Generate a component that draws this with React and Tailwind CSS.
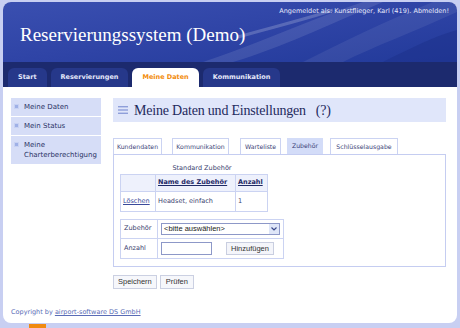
import { useState } from "react";

const sans = { fontFamily: '"DejaVu Sans", Verdana, sans-serif' };
const serif = { fontFamily: '"Liberation Serif", Georgia, serif' };
const arial = { fontFamily: '"Liberation Sans", Arial, sans-serif' };

function NavTab({ label, active }) {
    return (
        <div
            className={`h-[19px] px-[10px] rounded-t-[6px] flex items-center text-[6.5px] font-bold ${
                active ? "bg-white text-[#f28c0c]" : "bg-[#26388a] text-[#e4e8fb]"
            }`}
        >
            {label}
        </div>
    );
}

function SideItem({ children, last }) {
    return (
        <div className={`flex items-start gap-[5px] px-[3px] py-[4px] ${last ? "" : "border-b border-white"}`}>
            <span className="mt-[2px] w-[5px] h-[5px] shrink-0 bg-[#9fb0e6] border border-[#c7d1f3]" />
            <span className="text-[7px] leading-[10px] text-[#2b3466]">{children}</span>
        </div>
    );
}

function SubTab({ label, active, className }) {
    return (
        <div
            className={`h-[16px] flex items-center justify-center text-[6.2px] text-[#3c4478] ${className} ${
                active ? "bg-[#d3dcf8] border border-[#d3dcf8]" : "bg-white border border-[#cbd3f2] border-b-0"
            }`}
        >
            {label}
        </div>
    );
}

export default function App() {
    const [anzahl, setAnzahl] = useState("");

    return (
        <div className="w-[460px] h-[328px] bg-[#c8cff2] pt-[2px] px-[3px] overflow-hidden relative" style={sans}>
            <div className="h-[321px] rounded-[8px] overflow-hidden bg-white flex flex-col">
                {/* header */}
                <div className="h-[60px] relative bg-gradient-to-br from-[#3a4fb0] via-[#2f44a6] to-[#223a9a] overflow-hidden">
                    <svg className="absolute inset-0" width="454" height="60" viewBox="0 0 454 60">
                        <path d="M200 60 C 260 40, 300 20, 360 0 L 380 0 C 320 25, 280 45, 230 60 Z" fill="#ffffff" opacity="0.1" />
                        <path d="M235 35 C 270 25, 300 18, 330 8" stroke="#ffffff" strokeWidth="3" fill="none" opacity="0.2" />
                        <path d="M300 60 C 340 40, 380 20, 430 0 L 454 0 L 454 10 C 410 30, 370 45, 340 60 Z" fill="#ffffff" opacity="0.07" />
                        <path d="M380 60 C 410 45, 430 35, 454 28 L 454 60 Z" fill="#1b2f8a" opacity="0.5" />
                    </svg>
                    <div className="absolute right-[8px] top-[5px] text-[6.5px] text-[#e6eafc]">
                        Angemeldet als: Kunstflieger, Karl (419). Abmelden!
                    </div>
                    <div className="absolute left-[17px] top-[23px] text-[19px] text-white leading-none" style={serif}>
                        Reservierungssystem (Demo)
                    </div>
                </div>

                {/* nav */}
                <div className="h-[25px] bg-[#1c2a6e] flex items-end gap-[4px] px-[5px]">
                    <NavTab label="Start" />
                    <NavTab label="Reservierungen" />
                    <NavTab label="Meine Daten" active />
                    <NavTab label="Kommunikation" />
                </div>

                {/* content */}
                <div className="flex-1 flex flex-col pl-[8px] pr-[11px] pt-[11px]">
                    <div className="flex gap-[12px]">
                        <div className="w-[90px] bg-[#d6ddf7] self-start">
                            <SideItem>Meine Daten</SideItem>
                            <SideItem>Mein Status</SideItem>
                            <SideItem last>
                                Meine
                                <br />
                                Charterberechtigung
                            </SideItem>
                        </div>

                        <div className="flex-1">
                            <div className="h-[24px] bg-[#e0e6fa] flex items-center pl-[5px] gap-[6px]">
                                <svg width="10" height="8" viewBox="0 0 10 8">
                                    <rect x="0" y="0" width="10" height="1.4" fill="#8f9fda" />
                                    <rect x="0" y="3.3" width="10" height="1.4" fill="#8f9fda" />
                                    <rect x="0" y="6.6" width="10" height="1.4" fill="#8f9fda" />
                                </svg>
                                <span className="text-[14px] tracking-[-0.2px] text-[#1f2a5e]" style={serif}>
                                    Meine Daten und Einstellungen&nbsp;&nbsp; (?)
                                </span>
                            </div>

                            <div className="flex mt-[16px]">
                                <SubTab label="Kundendaten" className="w-[49px]" />
                                <SubTab label="Kommunikation" className="w-[57px] ml-[10px]" />
                                <SubTab label="Warteliste" className="w-[41px] ml-[11px]" />
                                <SubTab label="Zubehör" active className="w-[36px] ml-[6px]" />
                                <SubTab label="Schlüsselausgabe" className="w-[68px] ml-[7px]" />
                            </div>

                            <div className="h-[113px] border border-[#c5cdf1] px-[6px] pt-[9px]">
                                <table className="border-collapse text-[6.5px] text-[#3a4270]">
                                    <caption className="text-center leading-[8px] pb-[2px] pl-[16px]">Standard Zubehör</caption>
                                    <tbody>
                                        <tr className="h-[17px] bg-[#eef1fc]">
                                            <td className="border border-[#cbd3f2] w-[35px]"></td>
                                            <td className="border border-[#cbd3f2] px-[2px] w-[80px] font-bold underline text-[#1e2a66]">
                                                Name des Zubehör
                                            </td>
                                            <td className="border border-[#cbd3f2] px-[2px] w-[32px] font-bold underline text-[#1e2a66]">
                                                Anzahl
                                            </td>
                                        </tr>
                                        <tr className="h-[20px]">
                                            <td className="border border-[#cbd3f2] px-[2px] underline text-[#3a4a9a]">Löschen</td>
                                            <td className="border border-[#cbd3f2] px-[2px]">Headset, einfach</td>
                                            <td className="border border-[#cbd3f2] px-[2px]">1</td>
                                        </tr>
                                    </tbody>
                                </table>

                                <table className="border-collapse text-[6.5px] text-[#3a4270] mt-[7px]">
                                    <tbody>
                                        <tr className="h-[19px]">
                                            <td className="border border-[#cbd3f2] px-[3px] w-[37px]">Zubehör</td>
                                            <td className="border border-[#cbd3f2] px-[3px] w-[126px]">
                                                <div className="h-[12px] border border-[#8d98c8] bg-white flex items-center justify-between pl-[2px]">
                                                    <span className="text-[7.5px] text-[#222]" style={arial}>
                                                        &lt;bitte auswählen&gt;
                                                    </span>
                                                    <span className="w-[10px] h-[10px] bg-[#dfe6f8] flex items-center justify-center">
                                                        <svg width="6" height="4" viewBox="0 0 6 4">
                                                            <path d="M0.5 0.5 L3 3 L5.5 0.5" stroke="#3a4a8a" strokeWidth="1.2" fill="none" />
                                                        </svg>
                                                    </span>
                                                </div>
                                            </td>
                                        </tr>
                                        <tr className="h-[20px]">
                                            <td className="border border-[#cbd3f2] px-[3px]">Anzahl</td>
                                            <td className="border border-[#cbd3f2] px-[3px]">
                                                <div className="flex items-center gap-[14px]">
                                                    <input
                                                        value={anzahl}
                                                        onChange={(e) => setAnzahl(e.target.value)}
                                                        className="w-[51px] h-[13px] border border-[#8d98c8] outline-none text-[7px] px-[1px]"
                                                    />
                                                    <button className="h-[13px] px-[4px] bg-[#f4f5fa] border border-[#c9cee0] text-[7.5px] text-[#333]" style={arial}>
                                                        Hinzufügen
                                                    </button>
                                                </div>
                                            </td>
                                        </tr>
                                    </tbody>
                                </table>
                            </div>

                            <div className="flex gap-[3px] mt-[8px]">
                                <button className="h-[14px] px-[4px] bg-[#f6f7fb] border border-[#cbd0e2] text-[7.5px] text-[#333]" style={arial}>
                                    Speichern
                                </button>
                                <button className="h-[14px] px-[5px] bg-[#f6f7fb] border border-[#cbd0e2] text-[7.5px] text-[#333]" style={arial}>
                                    Prüfen
                                </button>
                            </div>
                        </div>
                    </div>

                    <div className="mt-auto mb-[5px] text-[6.5px] text-[#5a6cb6]">
                        Copyright by <span className="underline">airport-software DS GmbH</span>
                    </div>
                </div>
            </div>
            <div className="absolute left-[29px] bottom-0 w-[17px] h-[4px] bg-[#f08a10]" />
        </div>
    );
}
